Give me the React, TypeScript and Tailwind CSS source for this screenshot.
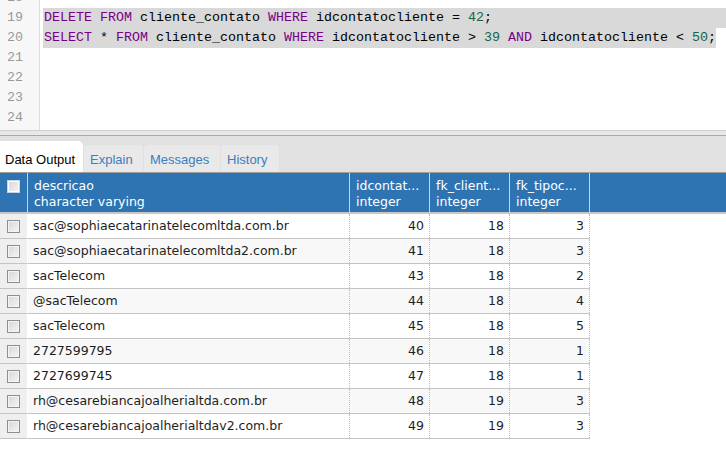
import React from "react";

const mono = "font-['Liberation_Mono','Courier_New',monospace]";
const ui = "font-['DejaVu_Sans','Verdana',sans-serif]";

type Tok = { t: string; c?: "kw" | "num" };

const kw = (t: string): Tok => ({ t, c: "kw" });
const num = (t: string): Tok => ({ t, c: "num" });
const tx = (t: string): Tok => ({ t });

const lines: { n: number; toks: Tok[]; sel?: "full" | "text" }[] = [
  { n: 18, toks: [] },
  {
    n: 19,
    sel: "full",
    toks: [
      kw("DELETE"),
      tx(" "),
      kw("FROM"),
      tx(" cliente_contato "),
      kw("WHERE"),
      tx(" idcontatocliente = "),
      num("42"),
      tx(";"),
    ],
  },
  {
    n: 20,
    sel: "text",
    toks: [
      kw("SELECT"),
      tx(" * "),
      kw("FROM"),
      tx(" cliente_contato "),
      kw("WHERE"),
      tx(" idcontatocliente > "),
      num("39"),
      tx(" "),
      kw("AND"),
      tx(" idcontatocliente < "),
      num("50"),
      tx(";"),
    ],
  },
  { n: 21, toks: [] },
  { n: 22, toks: [] },
  { n: 23, toks: [] },
  { n: 24, toks: [] },
];

const rows: [string, number, number, number][] = [
  ["sac@sophiaecatarinatelecomltda.com.br", 40, 18, 3],
  ["sac@sophiaecatarinatelecomltda2.com.br", 41, 18, 3],
  ["sacTelecom", 43, 18, 2],
  ["@sacTelecom", 44, 18, 4],
  ["sacTelecom", 45, 18, 5],
  ["2727599795", 46, 18, 1],
  ["2727699745", 47, 18, 1],
  ["rh@cesarebiancajoalherialtda.com.br", 48, 19, 3],
  ["rh@cesarebiancajoalherialtdav2.com.br", 49, 19, 3],
];

function Checkbox({ header }: { header?: boolean }) {
  return (
    <span
      className={
        header
          ? "block w-[13px] h-[13px] border border-[#c9d3dd] bg-gradient-to-br from-[#d8d8d8] to-[#f4f4f4] shadow-[inset_0_0_0_1px_#ffffff]"
          : "block w-[13px] h-[13px] border border-[#8e8e8e] bg-gradient-to-br from-[#d6d6d6] to-[#f6f6f6] shadow-[inset_0_0_0_1px_#f4f4f4]"
      }
    />
  );
}

function Editor() {
  return (
    <div className="flex h-[131px] overflow-hidden bg-white border-b border-[#cfcfcf]">
      <div className="w-[40px] shrink-0 bg-[#f7f7f7] border-r border-[#dddddd]">
        <div className="-mt-[12px]">
          {lines.map((l) => (
            <div
              key={l.n}
              className={`${mono} h-[20px] leading-[20px] text-[13.333px] text-[#999999] pl-[7px]`}
            >
              {l.n}
            </div>
          ))}
        </div>
      </div>
      <div className="flex-1 min-w-0 pl-[3px]">
        <div className="-mt-[12px]">
          {lines.map((l) => (
            <div
              key={l.n}
              className={`${mono} h-[20px] leading-[20px] text-[13.333px] text-black whitespace-pre`}
            >
              <span
                className={
                  l.sel === "full"
                    ? "block bg-[#d9d9d9] pl-[1px]"
                    : l.sel === "text"
                    ? "inline-block bg-[#d9d9d9] pl-[1px]"
                    : "block pl-[1px]"
                }
              >
                {l.toks.map((t, i) => (
                  <span
                    key={i}
                    className={
                      t.c === "kw"
                        ? "text-[#770088]"
                        : t.c === "num"
                        ? "text-[#116644]"
                        : ""
                    }
                  >
                    {t.t}
                  </span>
                ))}
                {l.toks.length === 0 ? " " : null}
              </span>
            </div>
          ))}
        </div>
      </div>
    </div>
  );
}

function Tabs() {
  const tab =
    "font-['Liberation_Sans',Arial,sans-serif] text-[13px] h-[27px] leading-[29px] px-[6px] bg-[#e9e9e9] text-[#3d7cc0] rounded-t-[4px]";
  return (
    <div className="border-t-[4px] border-[#e8e8e8]">
      <div className="flex items-end gap-[1px] h-[37px] bg-[#e1e1e1] border-t border-[#a8a8a8]">
        <div className="font-['Liberation_Sans',Arial,sans-serif] text-[13px] h-[31px] leading-[37px] w-[83px] pl-[5px] bg-white text-black rounded-tr-[5px]">
          Data Output
        </div>
        <div className={`${tab} w-[59px]`}>Explain</div>
        <div className={`${tab} w-[76px]`}>Messages</div>
        <div className={`${tab} w-[58px]`}>History</div>
      </div>
    </div>
  );
}

function Grid() {
  const numCell =
    "w-[80px] shrink-0 text-right pr-[5px] border-r border-dotted border-[#bdbdbd]";
  return (
    <div className={`${ui} text-[12.5px] text-[#1e1e1e]`}>
      <div className="flex h-[42px] bg-[#2e74b2] border-t border-[#a0a0a0] border-b-2 border-b-[#c8c8c8] text-white">
        <div className="w-[28px] shrink-0 flex justify-center pt-[7px] border-r border-[#c6d4e2] pr-[1px]">
          <Checkbox header />
        </div>
        <div className="w-[322px] shrink-0 pl-[6px] pt-[5px] leading-[16px] border-r border-[#c6d4e2]">
          <div>descricao</div>
          <div>character varying</div>
        </div>
        {["idcontat...", "fk_client...", "fk_tipoc..."].map((h) => (
          <div
            key={h}
            className="w-[80px] shrink-0 pl-[6px] pt-[5px] leading-[16px] border-r border-[#c6d4e2]"
          >
            <div>{h}</div>
            <div>integer</div>
          </div>
        ))}
        <div className="flex-1" />
      </div>
      {rows.map(([d, a, b, c], i) => (
        <div key={i} className="flex h-[25px]">
          <div className="w-[28px] shrink-0 flex items-center justify-center pr-[1px] bg-[#efefef] border-r border-white border-b border-b-[#c4c4c4]">
            <Checkbox />
          </div>
          <div
            className={`flex w-[562px] shrink-0 items-center border-b border-[#c4c4c4] ${
              i % 2 === 1 ? "bg-[#f8f8f8]" : "bg-white"
            }`}
          >
            <div className="w-[322px] shrink-0 pl-[5px] pt-[1px] border-r border-dotted border-[#bdbdbd] h-full flex items-center">
              {d}
            </div>
            <div className={`${numCell} pt-[1px] h-full flex items-center justify-end`}>{a}</div>
            <div className={`${numCell} pt-[1px] h-full flex items-center justify-end`}>{b}</div>
            <div className={`${numCell} pt-[1px] h-full flex items-center justify-end`}>{c}</div>
          </div>
        </div>
      ))}
    </div>
  );
}

export default function App() {
  return (
    <div className="w-[726px] h-[473px] overflow-hidden bg-white">
      <Editor />
      <Tabs />
      <Grid />
    </div>
  );
}
